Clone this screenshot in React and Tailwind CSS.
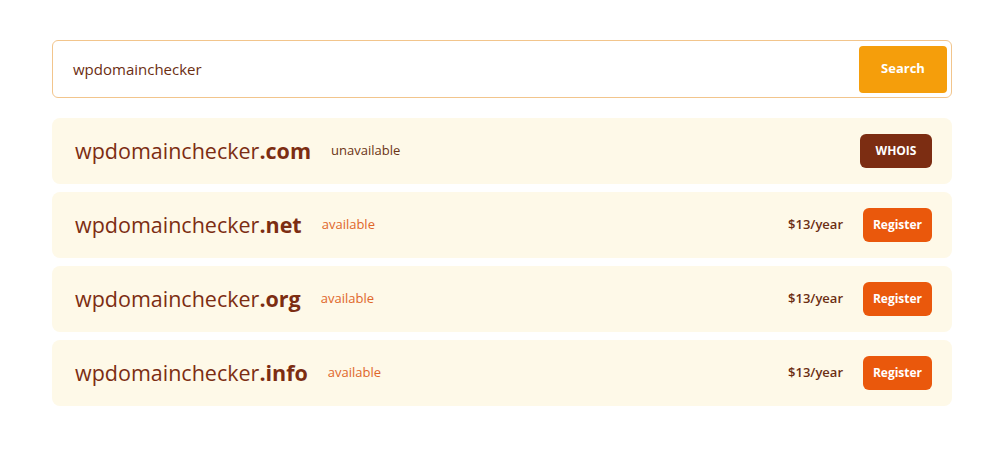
import React from "react";

const domains = [
  { tld: ".com", available: false },
  { tld: ".net", available: true, price: "$13/year" },
  { tld: ".org", available: true, price: "$13/year" },
  { tld: ".info", available: true, price: "$13/year" },
];

function DomainRow({ name, tld, available, price }) {
  return (
    <div className="flex items-center h-[66px] pl-[23px] pr-5 rounded-lg bg-[#fef9e8]">
      <div className="text-[21.5px] text-[#7c2d12]">
        {name}
        <span className="font-bold">{tld}</span>
      </div>
      {available ? (
        <span className="ml-5 text-[13px] text-[#e0662a]">available</span>
      ) : (
        <span className="ml-5 text-[13px] text-[#6b3414]">unavailable</span>
      )}
      <div className="ml-auto flex items-center">
        {available && (
          <span className="mr-5 text-[13px] font-semibold text-[#6b2e12]">{price}</span>
        )}
        {available ? (
          <button className="h-[34px] w-[69px] rounded-md bg-[#ea580c] text-white text-[12px] font-bold">
            Register
          </button>
        ) : (
          <button className="h-[34px] w-[72px] rounded-md bg-[#7c2d12] text-white text-[12px] font-bold">
            WHOIS
          </button>
        )}
      </div>
    </div>
  );
}

export default function App() {
  const query = "wpdomainchecker";

  return (
    <div
      className="min-h-screen bg-white pt-10"
      style={{ fontFamily: "'Open Sans', 'Noto Sans', sans-serif" }}
    >
      <div className="ml-[52px] w-[900px]">
        <div className="flex items-center h-[58px] pl-5 pr-1 rounded-md border border-[#f2c58c] bg-white">
          <div className="flex-1 text-[15px] text-[#6b2e12]">{query}</div>
          <button className="h-[47px] w-[88px] rounded-sm bg-[#f59e0b] text-white text-[13px] font-bold">
            Search
          </button>
        </div>
        <div className="mt-5 flex flex-col gap-2">
          {domains.map((d) => (
            <DomainRow key={d.tld} name={query} {...d} />
          ))}
        </div>
      </div>
    </div>
  );
}
